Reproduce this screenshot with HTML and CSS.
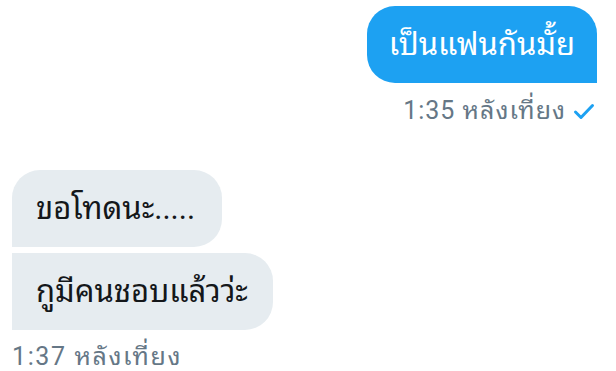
FILE: index.html
```html
<!DOCTYPE html>
<html lang="th">
<head>
    <meta charset="UTF-8">
    <meta name="viewport" content="width=device-width, initial-scale=1.0">
    <title>แชท</title>
    <link rel="stylesheet" href="styles.css">
</head>
<body>
    <div class="chat">
        <div class="group group-sent">
            <div class="bubble bubble-sent">เป็นแฟนกันมั้ย</div>
            <div class="meta">
                <span>1:35 หลังเที่ยง</span>
                <svg class="check" width="22" height="17" viewBox="0 0 22 17">
                    <path d="M2.5 9 L8 14.5 L19.5 2.5" fill="none" stroke="#1da1f2" stroke-width="3" stroke-linecap="round" stroke-linejoin="round"/>
                </svg>
            </div>
        </div>

        <div class="group group-received">
            <div class="bubble bubble-received first">ขอโทดนะ.....</div>
            <div class="bubble bubble-received last">กูมีคนชอบแล้วว่ะ</div>
            <div class="meta">
                <span>1:37 หลังเที่ยง</span>
            </div>
        </div>
    </div>
</body>
</html>
```

FILE: styles.css
```css
body {
    font-family: Roboto, "Noto Sans Thai Looped", "Noto Sans Thai", "Loma", "Garuda", "Waree", "Noto Sans", sans-serif;
    margin: 0;
    padding: 0;
    background: #ffffff;
}

.chat {
    display: flex;
    flex-direction: column;
    padding: 6px 19px 0 12px;
}

.group {
    display: flex;
    flex-direction: column;
}

.group-sent {
    align-items: flex-end;
}

.group-received {
    align-items: flex-start;
    margin-top: 44px;
}

.bubble {
    font-size: 31px;
    line-height: 37px;
    padding: 20px 25px;
    border-radius: 28px;
}

.bubble-sent {
    background: #1da1f2;
    color: #ffffff;
    padding-left: 22px;
    padding-right: 22px;
    border-bottom-right-radius: 0;
}

.bubble-received {
    background: #e6ecf0;
    color: #14171a;
    padding-left: 24px;
    padding-right: 27px;
}

.bubble-received.first {
    border-bottom-left-radius: 0;
}

.bubble-received.last {
    border-top-left-radius: 0;
    border-bottom-left-radius: 0;
    margin-top: 6px;
    padding-right: 25px;
}

.meta {
    display: flex;
    align-items: center;
    gap: 7px;
    color: #657786;
    font-size: 25px;
    line-height: 30px;
    letter-spacing: 1px;
    margin-top: 13px;
}

.group-sent .meta {
    margin-right: 2px;
}

.group-received .meta {
    margin-top: 12px;
    letter-spacing: 1.6px;
}
```
